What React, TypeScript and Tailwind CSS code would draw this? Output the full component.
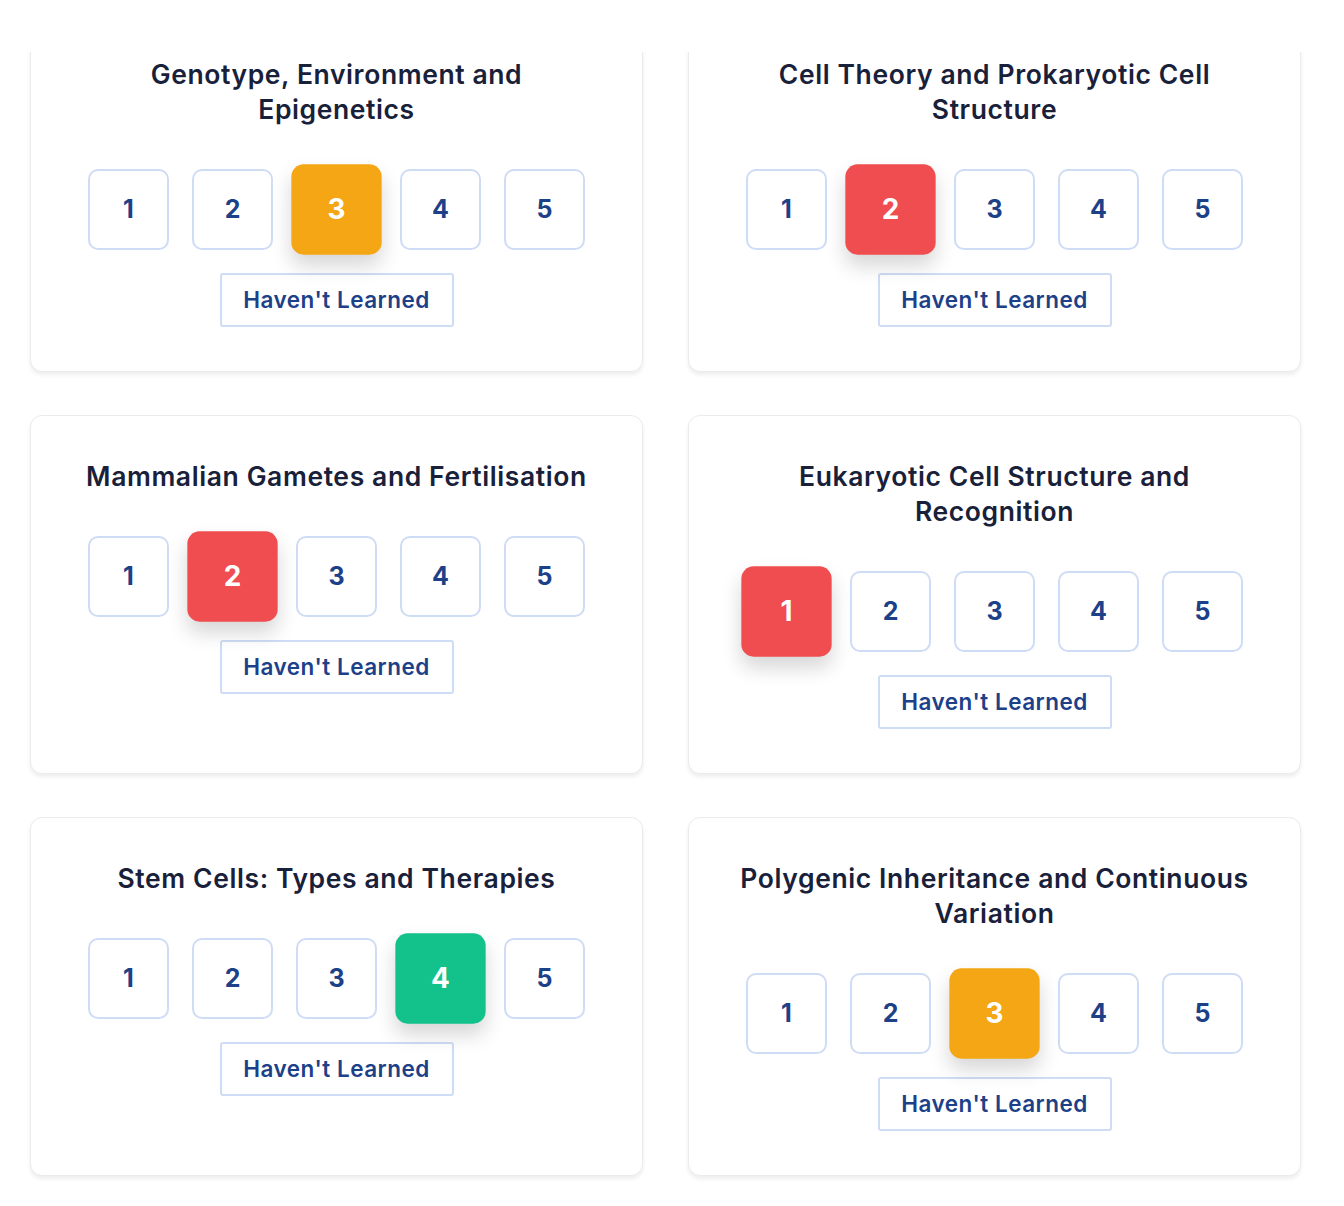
import React from 'react';

type Topic = {
  title: string;
  rating: number;
};

const topics: Topic[] = [
  { title: 'Genotype, Environment and Epigenetics', rating: 3 },
  { title: 'Cell Theory and Prokaryotic Cell Structure', rating: 2 },
  { title: 'Mammalian Gametes and Fertilisation', rating: 2 },
  { title: 'Eukaryotic Cell Structure and Recognition', rating: 1 },
  { title: 'Stem Cells: Types and Therapies', rating: 4 },
  { title: 'Polygenic Inheritance and Continuous Variation', rating: 3 },
];

const activeColor: Record<number, string> = {
  1: 'bg-[#ef4d4f]',
  2: 'bg-[#ef4d4f]',
  3: 'bg-[#f4a614]',
  4: 'bg-[#12c28a]',
  5: 'bg-[#12c28a]',
};

const RatingBox = ({ n, active }: { n: number; active: boolean }) => {
  if (active) {
    return (
      <div
        className={`w-[81px] h-[81px] rounded-[11px] flex items-center justify-center text-white text-[25px] font-bold scale-[1.115] shadow-[0_10px_18px_rgba(0,0,0,0.16)] ${activeColor[n]}`}
      >
        {n}
      </div>
    );
  }
  return (
    <div className="w-[81px] h-[81px] rounded-[10px] border-2 border-[#cfdcf5] bg-white flex items-center justify-center text-[#1c4189] text-[25px] font-bold">
      {n}
    </div>
  );
};

const TopicCard = ({ topic }: { topic: Topic }) => {
  return (
    <div className="bg-white rounded-[12px] border border-[#ebebeb] shadow-[0_3px_4px_rgba(0,0,0,0.07)] flex flex-col items-center pt-[43px] pb-[44px]">
      <h3 className="max-w-[522px] text-center text-[26.5px] leading-[35px] font-semibold text-[#19213a] tracking-[0.6px]">
        {topic.title}
      </h3>
      <div className="mt-[42px] flex gap-[23px]">
        {[1, 2, 3, 4, 5].map((n) => (
          <RatingBox key={n} n={n} active={n === topic.rating} />
        ))}
      </div>
      <button className="mt-[23px] w-[234px] h-[54px] rounded-[3px] border-2 border-[#cfdcf5] bg-white text-[#1c4189] text-[22.5px] font-semibold tracking-[0.5px]">
        Haven't Learned
      </button>
    </div>
  );
};

export default function App() {
  return (
    <div className="w-[1344px] h-[1206px] bg-white overflow-hidden font-['Inter',sans-serif]">
      <div className="mt-[52px] h-[1154px] overflow-hidden">
        <div className="-mt-[39px] pl-[30px] grid grid-cols-[613px_613px] gap-x-[45px] gap-y-[43px]">
          {topics.map((t) => (
            <TopicCard key={t.title} topic={t} />
          ))}
        </div>
      </div>
    </div>
  );
}
